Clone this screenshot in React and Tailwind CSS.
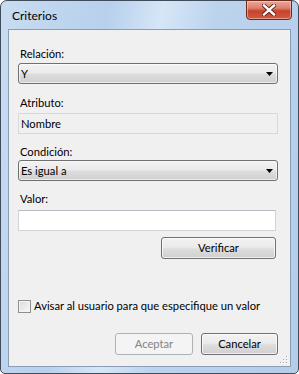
import React from "react";

const font = { fontFamily: 'Lato, "Noto Sans", sans-serif' };

function Arrow() {
  return (
    <svg width="7" height="4" viewBox="0 0 7 4" className="block">
      <path d="M0 0H7L3.5 4Z" fill="#000" />
    </svg>
  );
}

function Combo({ value }) {
  return (
    <div className="mr-[2px] flex h-[21px] items-center justify-between rounded-[3px] border border-[#707070] bg-[linear-gradient(to_bottom,#f2f2f2_0%,#ebebeb_45%,#dddddd_55%,#cfcfcf_100%)] pl-[2px] pr-[4px] shadow-[inset_0_0_0_1px_rgba(255,255,255,0.6)]">
      <span className="leading-[16px]">{value}</span>
      <Arrow />
    </div>
  );
}

function Button({ children, disabled, className = "" }) {
  return (
    <div
      className={
        "flex h-[22px] items-center justify-center rounded-[3px] border leading-[16px] " +
        (disabled
          ? "border-[#adb2b5] bg-[#f4f4f4] text-[#838383] "
          : "border-[#707070] bg-[linear-gradient(to_bottom,#f2f2f2_0%,#ebebeb_45%,#dddddd_55%,#cfcfcf_100%)] text-black shadow-[inset_0_0_0_1px_rgba(255,255,255,0.7)] ") +
        className
      }
    >
      {children}
    </div>
  );
}

export default function App() {
  return (
    <div
      className="relative flex h-[374px] w-[299px] flex-col rounded-t-[7px] rounded-b-[5px] border border-[#3f4c5b] bg-[linear-gradient(100deg,#c9dcf1_0%,#b7d0ec_30%,#d6e6f7_45%,#bcd3ee_60%,#b4cdea_100%)] text-[11.2px] text-black"
      style={font}
    >
      {/* title bar */}
      <div className="flex h-[28px] shrink-0 items-center pl-[11px] pt-[2px]">
        <span className="text-[12px] leading-[16px] text-black">Criterios</span>
      </div>
      {/* close button */}
      <div className="absolute right-[6px] top-[-1px] flex h-[20px] w-[46px] items-center justify-center rounded-b-[4px] border border-[#6b2a1f] bg-[linear-gradient(to_bottom,#e9a99b_0%,#dd7f6a_40%,#c8432b_55%,#d05a3f_100%)] shadow-[inset_0_0_0_1px_rgba(255,220,210,0.5)]">
        <svg width="14" height="12" viewBox="0 0 14 12">
          <path
            d="M2 1.5L12 10.5M12 1.5L2 10.5"
            stroke="#5a1d14"
            strokeWidth="4.2"
            strokeLinecap="square"
          />
          <path
            d="M2 1.5L12 10.5M12 1.5L2 10.5"
            stroke="#ffffff"
            strokeWidth="2.4"
            strokeLinecap="square"
          />
        </svg>
      </div>
      {/* client area */}
      <div className="relative mx-[7px] mb-[6px] flex flex-1 flex-col border border-[#8a9db3] bg-[#f0f0f0] pl-[9px] pr-[10px]">
        <div className="mt-[16px] h-[16px] pl-[2px] leading-[16px]">Relación:</div>
        <div className="mt-[1px]">
          <Combo value="Y" />
        </div>
        <div className="mt-[11px] h-[16px] pl-[2px] leading-[16px]">Atributo:</div>
        <div className="mt-[2px] mr-[2px] flex h-[21px] items-center border border-[#d9d9d9] pl-[2px] leading-[16px]">
          Nombre
        </div>
        <div className="mt-[10px] h-[16px] pl-[2px] leading-[16px]">Condición:</div>
        <div className="mt-[0px]">
          <Combo value="Es igual a" />
        </div>
        <div className="mt-[10px] h-[16px] pl-[2px] leading-[16px]">Valor:</div>
        <div className="mt-[3px] mr-[4px] h-[21px] border border-[#d2d4d8] border-t-[#b8bcc2] bg-white" />
        <div className="mt-[6px] flex justify-end pr-[4px]">
          <Button className="w-[115px]">Verificar</Button>
        </div>
        <div className="mt-[39px] flex items-center">
          <div className="h-[13px] w-[13px] shrink-0 border border-[#8e8f8f] bg-[linear-gradient(135deg,#dcdcdc,#f7f7f7)] shadow-[inset_0_0_0_1px_#f4f4f4]" />
          <span className="ml-[3px] whitespace-nowrap leading-[16px]">
            Avisar al usuario para que especifique un valor
          </span>
        </div>
        <div className="mt-[19px] flex justify-end gap-[8px] pr-[2px]">
          <Button disabled className="w-[78px]">
            Aceptar
          </Button>
          <Button className="w-[77px]">Cancelar</Button>
        </div>
        {/* size grip */}
        <svg
          width="8"
          height="8"
          viewBox="0 0 8 8"
          className="absolute bottom-[2px] right-[2px]"
        >
          {[
            [6, 0],
            [3, 3],
            [6, 3],
            [0, 6],
            [3, 6],
            [6, 6],
          ].map(([x, y], i) => (
            <g key={i}>
              <rect x={x + 1} y={y + 1} width="1" height="1" fill="#fff" />
              <rect x={x} y={y} width="1" height="1" fill="#a0a8b2" />
            </g>
          ))}
        </svg>
      </div>
    </div>
  );
}
